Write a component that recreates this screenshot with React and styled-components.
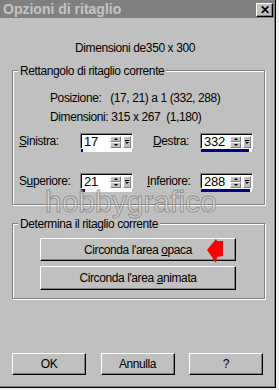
import styled, { createGlobalStyle } from 'styled-components';

const GlobalStyle = createGlobalStyle`
  html, body {
    margin: 0;
    padding: 0;
  }
  body {
    background: #f2f2f2;
    font-family: "Liberation Sans", Arial, sans-serif;
    font-size: 12px;
    letter-spacing: -0.4px;
    color: #000;
  }
`;

const Window = styled.div`
  position: relative;
  width: 276px;
  height: 388px;
  box-sizing: border-box;
  background: #c0c0c0;
  border-right: 1px solid #000;
  border-bottom: 1px solid #000;
  box-shadow: inset -1px -1px 0 #808080;
  display: flex;
  flex-direction: column;
`;

const TitleBar = styled.div`
  height: 18px;
  flex: none;
  display: flex;
  align-items: flex-start;
  justify-content: space-between;
  padding: 0 2px 0 3px;
  background: #808080;
`;

const TitleText = styled.span`
  font-weight: bold;
  font-size: 14px;
  line-height: 18px;
  letter-spacing: 0;
  color: #c4c4c4;
`;

const CloseButton = styled.div`
  margin-top: 3px;
  width: 17px;
  height: 14px;
  box-sizing: border-box;
  background: #c0c0c0;
  border: 1px solid;
  border-color: #fff #000 #000 #fff;
  box-shadow: inset -1px -1px 0 #808080;
  display: flex;
  align-items: center;
  justify-content: center;
  font-weight: bold;
  font-size: 12px;
  line-height: 12px;
  letter-spacing: 0;
`;

const Header = styled.div`
  margin-top: 23px;
  padding-right: 5px;
  text-align: center;
  line-height: 14px;
`;

const Group = styled.div`
  position: relative;
  margin: ${(p) => p.$top}px 0 0 12px;
  width: 253px;
  height: ${(p) => p.$h}px;
  box-sizing: border-box;
  border: 1px solid #808080;
  box-shadow: inset 1px 1px 0 #fff, 1px 1px 0 #fff;
`;

const Legend = styled.span`
  position: absolute;
  top: -7px;
  left: 5px;
  padding: 0 2px;
  background: #c0c0c0;
  line-height: 14px;
  white-space: nowrap;
`;

const Info = styled.div`
  padding: 18px 0 0 37px;
  line-height: 19px;
  white-space: pre;
`;

const Fields = styled.div`
  margin-top: 6px;
  padding-left: 6px;
  display: grid;
  grid-template-columns: 61px 53px 67px 53px;
  row-gap: 21px;
`;

const FieldLabel = styled.span`
  padding-left: ${(p) => p.$indent || 0}px;
  line-height: 16px;
`;

const SpinField = styled.div`
  display: flex;
  flex-direction: column;
`;

const SpinBox = styled.div`
  display: flex;
  align-items: center;
  width: 53px;
  height: 16px;
  box-sizing: border-box;
  background: #fff;
  border: 1px solid;
  border-color: #808080 #fff #fff #808080;
  box-shadow: inset 1px 1px 0 #000;
  padding: 1px 1px 0 2px;
`;

const Value = styled.span`
  flex: 1;
  line-height: 14px;
  padding-left: 1px;
  font-size: 13px;
  letter-spacing: -0.2px;
`;

const Spinner = styled.div`
  display: flex;
  flex-direction: column;
  width: 11px;
  height: 12px;
`;

const SpinButton = styled.div`
  flex: 1;
  display: flex;
  align-items: center;
  justify-content: center;
  box-sizing: border-box;
  background: #c0c0c0;
  border: 1px solid;
  border-color: #fff #808080 #808080 #fff;
`;

const PopButton = styled(SpinButton)`
  flex: none;
  width: 8px;
  height: 12px;
  margin-left: 2px;
  flex-direction: column;
  gap: 1px;
`;

const Arrow = styled.span`
  width: 0;
  height: 0;
  border-left: 2px solid transparent;
  border-right: 2px solid transparent;
  ${(p) => (p.$up ? 'border-bottom: 2px solid #000;' : 'border-top: 2px solid #000;')}
`;

const PopLine = styled.span`
  width: 4px;
  height: 1px;
  background: #000;
`;

const Track = styled.div`
  width: 51px;
  height: 3px;
  margin-left: 1px;
  background: #fff;
`;

const Fill = styled.div`
  height: 100%;
  background: #000080;
`;

const ActionList = styled.div`
  padding: 14px 0 0 27px;
  display: flex;
  flex-direction: column;
  gap: 5px;
`;

const Button = styled.button`
  position: relative;
  width: ${(p) => p.$w}px;
  height: ${(p) => p.$h}px;
  padding: 0;
  box-sizing: border-box;
  background: #c0c0c0;
  border: 1px solid;
  border-color: #fff #000 #000 #fff;
  box-shadow: inset -1px -1px 0 #808080;
  font: inherit;
  letter-spacing: inherit;
  color: #000;
  line-height: 14px;
`;

const Pointer = styled.svg`
  position: absolute;
  left: 166px;
  top: -2px;
`;

const Footer = styled.div`
  margin-top: auto;
  padding: 0 0 12px 12px;
  width: 251px;
  display: flex;
  justify-content: space-between;
`;

const Watermark = styled.div`
  position: absolute;
  left: 45px;
  top: 187px;
  font-size: 30px;
  line-height: 30px;
  letter-spacing: 0;
  color: rgba(230, 230, 230, 0.55);
  -webkit-text-stroke: 1px rgba(105, 105, 105, 0.6);
  pointer-events: none;
`;

const Spin = ({ value, max }) => (
  <SpinField>
    <SpinBox>
      <Value>{value}</Value>
      <Spinner>
        <SpinButton>
          <Arrow $up />
        </SpinButton>
        <SpinButton>
          <Arrow />
        </SpinButton>
      </Spinner>
      <PopButton>
        <PopLine />
        <Arrow />
      </PopButton>
    </SpinBox>
    <Track>
      <Fill style={{ width: `${Math.round((value / max) * 51)}px` }} />
    </Track>
  </SpinField>
);

export default function App() {
  return (
    <>
      <GlobalStyle />
      <Window>
        <TitleBar>
          <TitleText>Opzioni di ritaglio</TitleText>
          <CloseButton>✕</CloseButton>
        </TitleBar>

        <Header>Dimensioni de350 x 300</Header>

        <Group $top={15} $h={135}>
          <Legend>Rettangolo di ritaglio corrente</Legend>
          <Info>
            <div>Posizione:   (17, 21) a 1 (332, 288)</div>
            <div>Dimensioni: 315 x 267  (1,180)</div>
          </Info>
          <Fields>
            <FieldLabel>
              <u>S</u>inistra:
            </FieldLabel>
            <Spin value={17} max={350} />
            <FieldLabel $indent={20}>
              <u>D</u>estra:
            </FieldLabel>
            <Spin value={332} max={350} />
            <FieldLabel>
              S<u>u</u>periore:
            </FieldLabel>
            <Spin value={21} max={300} />
            <FieldLabel $indent={14}>
              <u>I</u>nferiore:
            </FieldLabel>
            <Spin value={288} max={300} />
          </Fields>
        </Group>

        <Group $top={18} $h={76}>
          <Legend>Determina il ritaglio corrente</Legend>
          <ActionList>
            <Button $w={196} $h={23}>
              Circonda l'area <u>o</u>paca
              <Pointer width="17" height="27" viewBox="0 0 17 27">
                <polygon points="0,13 9,2 10,4 16,4 16,19 10,20 9,26" fill="#f00" />
              </Pointer>
            </Button>
            <Button $w={196} $h={24}>
              Circonda l'area <u>a</u>nimata
            </Button>
          </ActionList>
        </Group>

        <Footer>
          <Button $w={74} $h={22}>OK</Button>
          <Button $w={74} $h={22}>Annulla</Button>
          <Button $w={74} $h={22}>?</Button>
        </Footer>

        <Watermark>hobbygrafico</Watermark>
      </Window>
    </>
  );
}
